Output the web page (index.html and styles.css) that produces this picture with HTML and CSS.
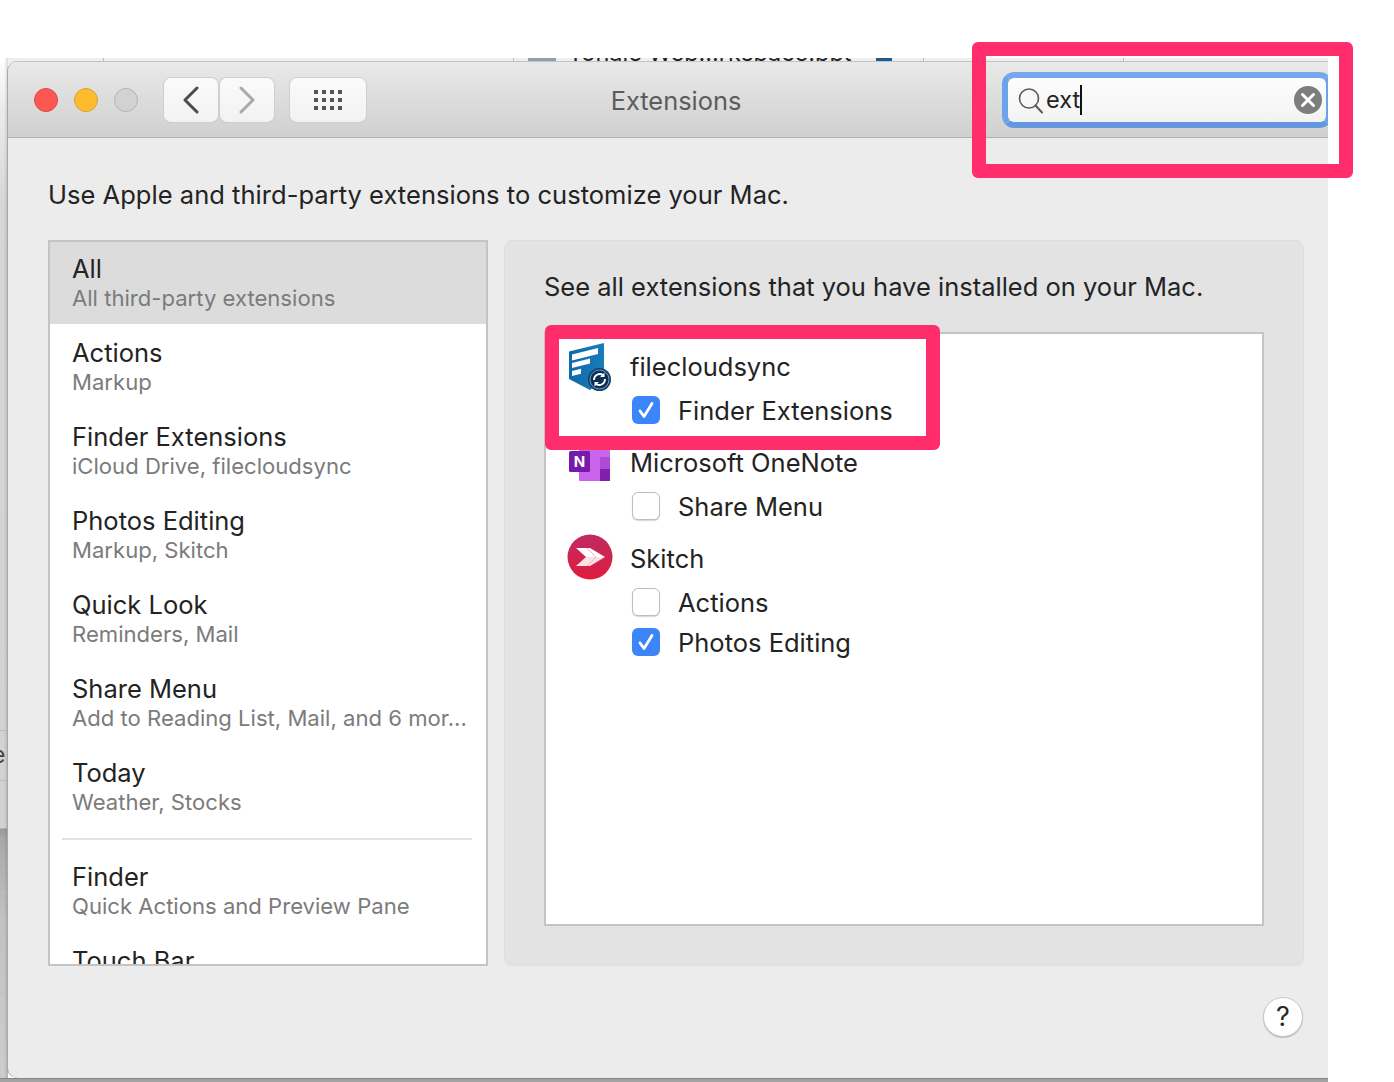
FILE: index.html
```html
<!DOCTYPE html>
<html lang="en">
<head>
<meta charset="utf-8">
<title>Extensions</title>
<link rel="stylesheet" href="styles.css">
</head>
<body>
<div class="desktop">
  <div class="bg-top">
    <span class="bg-divider bg-d1"></span>
    <span class="bg-divider bg-d2"></span>
    <span class="bg-divider bg-d3"></span>
    <span class="bg-divider bg-d4"></span>
    <span class="bg-file"></span>
    <span class="bg-name">Tonale Web...rksbace.ppt</span>
    <span class="bg-tag"></span>
  </div>
  <div class="bg-left">
    <span class="bg-left-e">e</span>
    <span class="bg-left-a"></span>
    <span class="bg-left-b"></span>
    <span class="bg-left-c"></span>
    <span class="bg-left-d"></span>
  </div>
  <div class="bg-bottom"></div>

  <main class="window">
    <header class="toolbar">
      <div class="lights">
        <span class="light light-red"></span>
        <span class="light light-yellow"></span>
        <span class="light light-gray"></span>
      </div>
      <div class="nav">
        <button class="tool-btn nav-btn" aria-label="Back">
          <svg width="18" height="28" viewBox="0 0 18 28"><path d="M15 2 3 14l12 12" fill="none" stroke="#4c4c4c" stroke-width="3" stroke-linecap="round" stroke-linejoin="round"/></svg>
        </button>
        <button class="tool-btn nav-btn" aria-label="Forward">
          <svg width="18" height="28" viewBox="0 0 18 28"><path d="M3 2l12 12L3 26" fill="none" stroke="#a9a9a9" stroke-width="3" stroke-linecap="round" stroke-linejoin="round"/></svg>
        </button>
      </div>
      <button class="tool-btn grid-btn" aria-label="Show all">
        <svg width="28" height="20" viewBox="0 0 28 20" fill="#555">
          <rect x="0" y="0" width="4" height="4"/><rect x="8" y="0" width="4" height="4"/><rect x="16" y="0" width="4" height="4"/><rect x="24" y="0" width="4" height="4"/>
          <rect x="0" y="8" width="4" height="4"/><rect x="8" y="8" width="4" height="4"/><rect x="16" y="8" width="4" height="4"/><rect x="24" y="8" width="4" height="4"/>
          <rect x="0" y="16" width="4" height="4"/><rect x="8" y="16" width="4" height="4"/><rect x="16" y="16" width="4" height="4"/><rect x="24" y="16" width="4" height="4"/>
        </svg>
      </button>
      <h1 class="title">Extensions</h1>
      <div class="search">
        <svg class="search-icon" width="26" height="28" viewBox="0 0 26 28"><circle cx="12" cy="11.5" r="9.5" fill="none" stroke="#5a5a5a" stroke-width="1.6"/><path d="M18.500 18.500l6.500 7" stroke="#5a5a5a" stroke-width="2" stroke-linecap="round"/></svg>
        <span class="search-text">ext</span><span class="caret"></span>
        <svg class="search-clear" width="28" height="28" viewBox="0 0 28 28"><circle cx="14" cy="14" r="14" fill="#7d7d7d"/><path d="M8.500 8.500l11 11M19.500 8.500l-11 11" stroke="#fff" stroke-width="3" stroke-linecap="round"/></svg>
      </div>
    </header>

    <section class="content">
      <p class="intro">Use Apple and third-party extensions to customize your Mac.</p>
      <div class="columns">
        <nav class="sidebar">
          <div class="row row-active"><div class="row-title">All</div><div class="row-sub">All third-party extensions</div></div>
          <div class="row"><div class="row-title">Actions</div><div class="row-sub">Markup</div></div>
          <div class="row"><div class="row-title">Finder Extensions</div><div class="row-sub">iCloud Drive, filecloudsync</div></div>
          <div class="row"><div class="row-title">Photos Editing</div><div class="row-sub">Markup, Skitch</div></div>
          <div class="row"><div class="row-title">Quick Look</div><div class="row-sub">Reminders, Mail</div></div>
          <div class="row"><div class="row-title">Share Menu</div><div class="row-sub">Add to Reading List, Mail, and 6 mor...</div></div>
          <div class="row"><div class="row-title">Today</div><div class="row-sub">Weather, Stocks</div></div>
          <div class="rule"></div>
          <div class="row"><div class="row-title">Finder</div><div class="row-sub">Quick Actions and Preview Pane</div></div>
          <div class="row"><div class="row-title">Touch Bar</div></div>
        </nav>

        <section class="panel">
          <p class="panel-intro">See all extensions that you have installed on your Mac.</p>
          <div class="ext-box">
            <div class="ext-group">
              <div class="ext-head">
                <svg class="ext-icon" width="46" height="50" viewBox="0 0 46 50">
                  <defs><linearGradient id="fc" x1="0" y1="0" x2="1" y2="0"><stop offset="0" stop-color="#0f6aa8"/><stop offset="1" stop-color="#1a7cba"/></linearGradient></defs>
                  <path d="M2 9.500 37 1v36L23 48 2 37z" fill="url(#fc)"/>
                  <path d="M5 12.500 31 6v6L5 18.500z" fill="#fff"/>
                  <path d="M5 21 23 16.500v5L5 26z" fill="#fff"/>
                  <path d="M5 29 14 26.800v5L5 34z" fill="#fff"/>
                  <circle cx="32.500" cy="37.500" r="11.500" fill="#123f6b"/>
                  <circle cx="32.500" cy="37.500" r="9.500" fill="#0c2f55" stroke="#6f9fc4" stroke-width="1"/>
                  <path d="M27 38a5.800 5.800 0 0 1 9-5M38 37a5.800 5.800 0 0 1-9 5" fill="none" stroke="#fff" stroke-width="1.800"/>
                  <path d="M37.500 30.500v4.500h-4.500zM27.500 44.500V40h4.500z" fill="#fff"/>
                </svg>
                <span class="ext-name">filecloudsync</span>
              </div>
              <label class="ext-check"><span class="box box-on"><svg width="28" height="28" viewBox="0 0 28 28"><path d="M8 15l4 5.500L20 7.500" fill="none" stroke="#fff" stroke-width="2.800" stroke-linecap="round" stroke-linejoin="round"/></svg></span>Finder Extensions</label>
            </div>
            <div class="ext-group">
              <div class="ext-head">
                <svg class="ext-icon" width="46" height="36" viewBox="0 0 46 36">
                  <rect x="12" y="0" width="31" height="36" rx="1" fill="#ca64ea"/>
                  <rect x="33" y="12" width="10" height="12" fill="#ae4bd5"/>
                  <rect x="33" y="24" width="10" height="12" fill="#7f1fae"/>
                  <rect x="2" y="6" width="21" height="21" rx="1.500" fill="#7719aa"/>
                  <text class="onenote-n" x="12.500" y="22" text-anchor="middle">N</text>
                </svg>
                <span class="ext-name">Microsoft OneNote</span>
              </div>
              <label class="ext-check"><span class="box"></span>Share Menu</label>
            </div>
            <div class="ext-group">
              <div class="ext-head">
                <svg class="ext-icon ext-icon-up" width="46" height="46" viewBox="0 0 46 46">
                  <defs><linearGradient id="skitch" x1="0" y1="0" x2="0" y2="1"><stop offset="0" stop-color="#bf2a63"/><stop offset="1" stop-color="#e01c3c"/></linearGradient></defs>
                  <circle cx="23" cy="23" r="22.500" fill="url(#skitch)"/>
                  <path d="M9 14h14l15 9H19z" fill="#fff"/>
                  <path d="M9 32h14l15-9H19z" fill="#fbe0e6"/>
                  <path d="M20 14l9 9-9 9" fill="none" stroke="#efb0c4" stroke-width="1"/>
                </svg>
                <span class="ext-name">Skitch</span>
              </div>
              <label class="ext-check"><span class="box"></span>Actions</label>
              <label class="ext-check"><span class="box box-on"><svg width="28" height="28" viewBox="0 0 28 28"><path d="M8 15l4 5.500L20 7.500" fill="none" stroke="#fff" stroke-width="2.800" stroke-linecap="round" stroke-linejoin="round"/></svg></span>Photos Editing</label>
            </div>
          </div>
        </section>
      </div>
      <div class="footer"><button class="help" aria-label="Help">?</button></div>
    </section>
  </main>

  <div class="mark mark-search"></div>
  <div class="mark mark-ext"></div>
</div>
</body>
</html>
```
FILE: styles.css
```css
* { box-sizing: border-box; }
html, body { margin: 0; padding: 0; background: #fff; }
body { font-family: Inter, "Liberation Sans", sans-serif; color: #232323; }

.desktop { position: relative; width: 1394px; height: 1082px; overflow: hidden; background: #fff; }

/* windows behind */
.bg-top { position: absolute; left: 8px; top: 58px; width: 1320px; height: 6px; overflow: hidden; background: #efefef; }
.bg-divider { position: absolute; top: 0; width: 1px; height: 6px; background: #bdbdbd; }
.bg-d1 { left: 95px; }
.bg-d2 { left: 505px; }
.bg-d3 { left: 915px; }
.bg-d4 { left: 1115px; }
.bg-file { position: absolute; left: 520px; top: 0; width: 28px; height: 6px; background: #8f9fb2; }
.bg-name { position: absolute; left: 560px; top: -17px; font-size: 23.500px; line-height: 24px; white-space: nowrap; color: #222; }
.bg-tag { position: absolute; left: 868px; top: 0; width: 16px; height: 6px; background: #1c5a94; }

.bg-left { position: absolute; left: 0; top: 58px; width: 8px; height: 1020px; overflow: hidden;
  background: linear-gradient(to right, rgba(0,0,0,0) 4px, rgba(0,0,0,.14)),
    linear-gradient(#fff, #ececec 50px, #d6d6d6 150px, #d2d2d2 770px, #999 771px, #a8a8a8 780px, #c2c2c2 860px, #cdcdcd 1020px); }
.bg-left-e { position: absolute; left: -8px; top: 683px; font-size: 23px; line-height: 28px; color: #444; }
.bg-left-a, .bg-left-b, .bg-left-c, .bg-left-d { position: absolute; left: 0; width: 8px; height: 1px; background: #bbb; }
.bg-left-a { top: 672px; }
.bg-left-b { top: 722px; }
.bg-left-c { top: 834px; }
.bg-left-d { top: 935px; }
.bg-bottom { position: absolute; left: 0; top: 1078px; width: 1328px; height: 4px; background: #a2a2a2; border-top: 1px solid #858585; }

/* window */
.window { position: absolute; left: 8px; top: 61px; width: 1320px; height: 1017px; overflow: hidden;
  display: flex; flex-direction: column; background: #ececec; border-radius: 10px 0 0 10px;
  box-shadow: -1px 0 0 #a8a8a8; }

.toolbar { flex: none; height: 77px; display: flex; align-items: center; padding-left: 26px;
  background: linear-gradient(#e9e9e9, #d0d0d0); border-top: 1px solid #c4c4c4; border-bottom: 1px solid #b0b0b0; }
.lights { display: flex; gap: 16px; margin-right: 26px; }
.light { width: 24px; height: 24px; border-radius: 50%; }
.light-red { background: #fc5753; border: 1px solid #df4744; }
.light-yellow { background: #fdbc2d; border: 1px solid #de9f34; }
.light-gray { background: #d2d2d2; border: 1px solid #b4b4b4; }

.nav { display: flex; gap: 2px; margin-right: 16px; }
.tool-btn { display: flex; align-items: center; justify-content: center; height: 44px; padding: 0; border: 0; border-radius: 7px;
  background: linear-gradient(#fafafa, #f2f2f2); box-shadow: 0 0 0 1px #cfcfcf, 0 1px 1px #bdbdbd; }
.nav-btn { width: 54px; }
.grid-btn { width: 76px; }

.title { flex: 1; margin: 2px 0 0; padding-right: 16px; text-align: center; font-size: 25.400px; font-weight: 400; color: #5c5c5c; }

.search { flex: none; width: 330px; height: 56px; margin-right: -4px; display: flex; align-items: center; padding-left: 9px; position: relative;
  background: linear-gradient(#fdfdfd, #f3f3f3); border: 6px solid; border-color: #74a7ee #6da3ea #6497e0; border-radius: 12px; }
.search-icon { flex: none; margin-top: 2px; }
.search-text { margin-left: 3px; font-size: 23.500px; line-height: 30px; color: #232323; }
.caret { width: 2px; height: 30px; background: #111; }
.search-clear { position: absolute; left: 286px; top: 8px; }

/* content */
.content { flex: 1; display: flex; flex-direction: column; padding: 0 24px 0 40px; min-height: 0; }
.intro { margin: 41px 0 29px; font-size: 25.500px; letter-spacing: .03px; line-height: 32px; color: #232323; }
.columns { flex: none; height: 726px; display: flex; gap: 16px; }

.sidebar { flex: none; width: 440px; height: 726px; overflow: hidden; background: #fff; border: 2px solid #c4c4c4; }
.row { height: 82px; margin-bottom: 2px; padding: 12px 0 0 22px; white-space: nowrap; }
.row-active { background: #dcdcdc; }
.row-title { font-size: 25.500px; line-height: 30px; color: #232323; }
.row-sub { font-size: 22.100px; line-height: 28px; color: #7b7b7b; }
.rule { height: 2px; margin: 10px 14px 10px 12px; background: #e2e2e2; }

.panel { flex: none; width: 800px; height: 726px; padding: 0 39px; background: #e3e3e3; border: 1px solid #dedede; border-radius: 8px; }
.panel-intro { margin: 30px 0 29px; font-size: 25.500px; line-height: 32px; color: #232323; }
.ext-box { width: 720px; height: 594px; padding-top: 9px; background: #fff; border: 2px solid #c4c4c4; }

.ext-group { padding-left: 21px; margin-bottom: 8px; }
.ext-head { display: flex; align-items: center; height: 48px; }
.ext-icon { flex: none; margin-right: 17px; }
.ext-icon-up { margin-top: -4px; }
.ext-name { font-size: 25.500px; line-height: 30px; color: #232323; }
.ext-check { display: flex; align-items: center; height: 40px; padding-bottom: 2px; margin-left: 65px; font-size: 25.500px; color: #232323; }
.box { flex: none; width: 28px; height: 28px; margin-right: 18px; border-radius: 6px; background: #fff; border: 1px solid #bdbdbd; box-shadow: 0 1px 1px #d5d5d5; }
.box-on { background: #3b85f8; border: 0; box-shadow: none; display: flex; }
.onenote-n { font-family: Inter, sans-serif; font-size: 15px; font-weight: 700; fill: #fff; }

.footer { flex: 1; display: flex; justify-content: flex-end; padding: 31px 1px 0 0; }
.help { width: 40px; height: 40px; padding: 0; border-radius: 50%; background: #fff; border: 1px solid #c8c8c8; box-shadow: 0 1px 1px #bbb;
  font-family: Inter, sans-serif; font-size: 27px; line-height: 36px; color: #2a2a2a; }

/* annotations */
.mark { position: absolute; border: 14px solid #ff2d6b; border-radius: 6px; }
.mark-search { left: 972px; top: 42px; width: 381px; height: 136px; }
.mark-ext { left: 545px; top: 325px; width: 395px; height: 125px; }
```
